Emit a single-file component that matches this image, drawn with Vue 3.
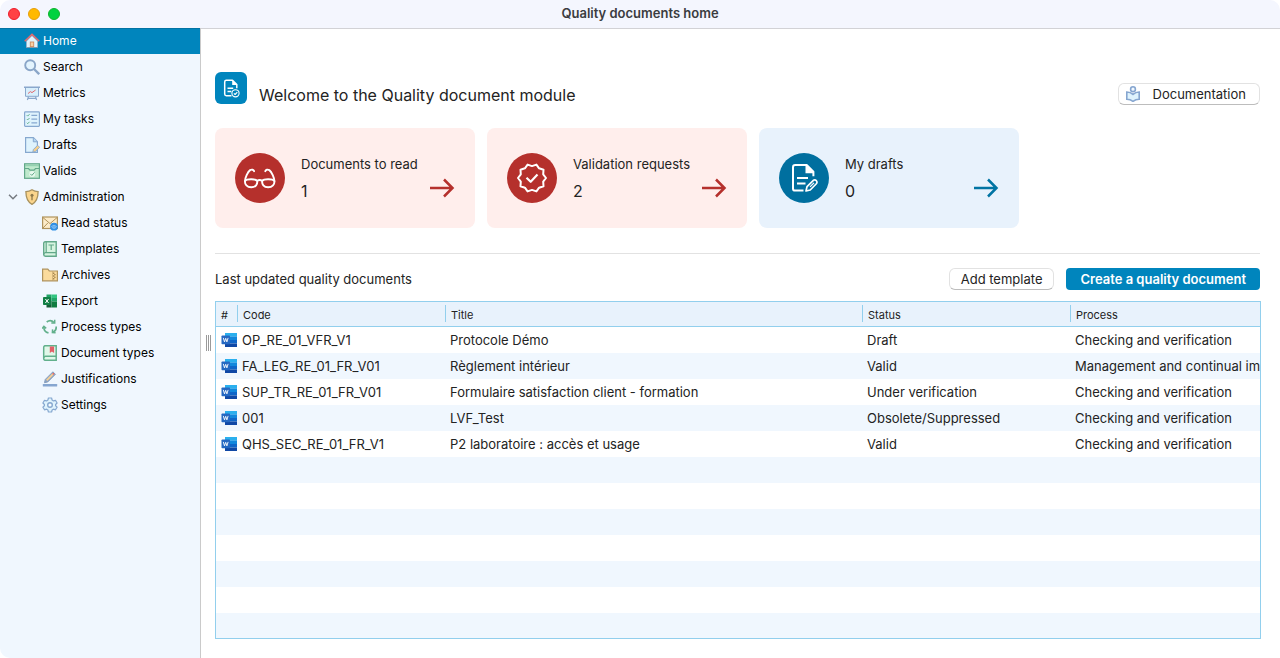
<script setup>
import { ref } from 'vue'

const adminOpen = ref(true)

const mainLinks = [
  { id: 'home', label: 'Home' },
  { id: 'search', label: 'Search' },
  { id: 'metrics', label: 'Metrics' },
  { id: 'tasks', label: 'My tasks' },
  { id: 'drafts', label: 'Drafts' },
  { id: 'valids', label: 'Valids' },
]

const adminLinks = [
  { id: 'read', label: 'Read status' },
  { id: 'templates', label: 'Templates' },
  { id: 'archives', label: 'Archives' },
  { id: 'export', label: 'Export' },
  { id: 'process', label: 'Process types' },
  { id: 'doctypes', label: 'Document types' },
  { id: 'justif', label: 'Justifications' },
  { id: 'settings', label: 'Settings' },
]

const cards = [
  { icon: 'glasses', label: 'Documents to read', count: 1, tone: 'red' },
  { icon: 'badge', label: 'Validation requests', count: 2, tone: 'red' },
  { icon: 'draftdoc', label: 'My drafts', count: 0, tone: 'blue' },
]

const documents = [
  { code: 'OP_RE_01_VFR_V1', title: 'Protocole Démo', status: 'Draft', process: 'Checking and verification' },
  { code: 'FA_LEG_RE_01_FR_V01', title: 'Règlement intérieur', status: 'Valid', process: 'Management and continual improvement' },
  { code: 'SUP_TR_RE_01_FR_V01', title: 'Formulaire satisfaction client - formation', status: 'Under verification', process: 'Checking and verification' },
  { code: '001', title: 'LVF_Test', status: 'Obsolete/Suppressed', process: 'Checking and verification' },
  { code: 'QHS_SEC_RE_01_FR_V1', title: 'P2 laboratoire : accès et usage', status: 'Valid', process: 'Checking and verification' },
]
</script>

<template>
  <div class="window">
    <svg class="sprite" aria-hidden="true">
      <symbol id="i-home" viewBox="0 0 16 16">
        <path d="M2.5 8v6.5h11V8L8 2.5z" fill="#dff3fd" stroke="#8fb4cf" />
        <path d="M2 14.5h12" stroke="#7f9bb0" />
        <rect x="6.3" y="9" width="3.4" height="4.6" fill="#f8cfa4" stroke="#d08a5c" stroke-width=".9" />
        <path d="M.7 8.3 8 1.4l7.3 6.9" fill="none" stroke="#e2696c" stroke-width="1.5" />
      </symbol>
      <symbol id="i-search" viewBox="0 0 16 16">
        <circle cx="6.2" cy="6.2" r="5" fill="#e3f4fe" stroke="#8aa6c8" stroke-width="1.9" />
        <path d="m10 10 5.2 5.2" stroke="#8aa6c8" stroke-width="2.4" />
      </symbol>
      <symbol id="i-metrics" viewBox="0 0 16 16">
        <path d="M1.5 2.5h13v8.8h-13z" fill="#d8effc" stroke="#8aa8cc" />
        <path d="M0 2.2h16" stroke="#8aa8cc" stroke-width="1.4" />
        <path d="M4.5 11.5 3.4 15M11.5 11.5l1.1 3.5M4 13.3h8" stroke="#8aa8cc" stroke-width="1.2" />
        <path d="m4 8.6 2.3-2 1.7 1L11.6 5" fill="none" stroke="#e2696c" />
      </symbol>
      <symbol id="i-tasks" viewBox="0 0 16 16">
        <rect x=".6" y=".9" width="14.8" height="14.4" rx=".8" fill="#dff3fd" stroke="#86a8cf" stroke-width="1.2" />
        <path d="M7.4 4.3h5.8M7.4 8.1h5.8M7.4 11.9h5.8" stroke="#86a8cf" stroke-width="1.2" />
        <path d="m2.8 4.2.9.9 1.8-1.9M2.8 8l.9.9L5.5 7M2.8 11.8l.9.9 1.8-1.9" fill="none" stroke="#62b08c" />
      </symbol>
      <symbol id="i-drafts" viewBox="0 0 16 16">
        <path d="M1.6.7h7.8l4 4v10.600H1.600z" fill="#dff3fd" stroke="#86a8cf" stroke-width="1.2" />
        <path d="M9.300.7v4.100h4" fill="#b5d5f3" stroke="#86a8cf" />
        <path d="m8.800 15.200.6-2.700 4.200-4.200 2 2-4.200 4.200z" fill="#f7cf8b" stroke="#86a8cf" stroke-width=".9" />
      </symbol>
      <symbol id="i-valids" viewBox="0 0 16 16">
        <rect x=".6" y=".8" width="14.8" height="14.5" fill="#bfe9cd" stroke="#62a889" stroke-width="1.2" />
        <path d="M1 5.5h3.5L6 7.200h4l1.500-1.700H15" fill="none" stroke="#62a889" stroke-width="1.2" />
        <path d="M1 2.7h14" stroke="#8ccdaa" />
        <circle cx="8.2" cy="11" r="3" fill="#e8f9ee" />
        <path d="m6.3 10.900 1.500 1.500 2.800-3" fill="none" stroke="#5fa988" />
      </symbol>
      <symbol id="i-admin" viewBox="0 0 16 16">
        <path d="M8 .8c2 1.300 4 1.800 6.100 1.800 0 6-1.100 10.200-6.100 12.800C3 12.800 1.900 8.600 1.900 2.600 4 2.600 6 2.100 8 .8z" fill="#fbd58c" stroke="#a8925f" stroke-width="1.3" />
        <circle cx="8" cy="6.2" r="1.5" fill="#8f7a4b" />
        <path d="M8 6v5.200" stroke="#8f7a4b" stroke-width="1.3" />
      </symbol>
      <symbol id="i-read" viewBox="0 0 16 16">
        <rect x=".6" y="2" width="14.8" height="11.5" fill="#fdebc8" stroke="#b0935c" stroke-width="1.2" />
        <path d="m1 2.600 7 6 7-6M1 13l4.800-5" fill="none" stroke="#b0935c" />
        <circle cx="12" cy="11.7" r="3.900" fill="#2f8fe5" />
        <path d="M9.600 11.900c1.400-2 3.400-2 4.800 0-1.400 1.800-3.400 1.800-4.800 0z" fill="none" stroke="#d5ecff" stroke-width=".6" />
        <circle cx="12" cy="11.8" r=".6" fill="#d5ecff" />
      </symbol>
      <symbol id="i-templates" viewBox="0 0 16 16">
        <path d="M3.300.7h10.900v14.600H3.400c-1.100 0-1.700-.8-1.700-1.700V2.400C1.700 1.400 2.300.7 3.300.7z" fill="#d6f4e0" stroke="#62a889" stroke-width="1.4" />
        <path d="M14 11.700H3.500c-1 0-1.600.6-1.600 1.700M4.200 1v10.600" fill="none" stroke="#62a889" stroke-width="1.2" />
        <path d="M6.500 4h5.500M9.200 4v5" stroke="#62a889" stroke-width="1.2" />
      </symbol>
      <symbol id="i-archives" viewBox="0 0 16 16">
        <path d="M.6 2.200h5.200L7.300 4h8.100v9.800H.6z" fill="#fbdb9c" stroke="#b0935c" stroke-width="1.2" />
        <path d="M10.500 4.500v9" stroke="#b0935c" stroke-width=".5" />
        <path d="M11.700 5.500v1.400M12.900 6.900v1.400M11.700 8.300v1.400M12.900 9.700v1.400M11.700 11.100v1.400" stroke="#a2824a" stroke-width="1.3" />
      </symbol>
      <symbol id="i-export" viewBox="0 0 16 16">
        <path d="M4.500 1.500h5V8h-5z" fill="#21a366" /><path d="M9.500 1.500H15V5H9.500z" fill="#33c481" />
        <path d="M9.500 5H15v3.500H9.500z" fill="#21a366" /><path d="M4.500 8h5v6.500h-5z" fill="#185c37" />
        <path d="M9.500 8.500H15v6H9.500z" fill="#107c41" />
        <rect x="1" y="4" width="8" height="8" rx=".8" fill="#128046" />
        <path d="m3.400 6 3.200 4M6.600 6l-3.200 4" stroke="#fff" />
      </symbol>
      <symbol id="i-process" viewBox="0 0 16 16">
        <g fill="none" stroke="#62b08c" stroke-width="1.700">
          <path d="M4.700 3C7 1.200 10 1.400 12 3.500" /><path d="M14.200 7.500c.2 2.500-1 4.700-3.300 5.800" /><path d="M6.500 13.900C3.600 13.300 1.900 11 1.800 8" />
          <path d="M12.700.7v3.400H9.300M13.600 13.700l-3.200-.2.200-3.100M0 9.600l1.900-2.200 2.300 2" stroke-width="1.5" />
        </g>
      </symbol>
      <symbol id="i-doctypes" viewBox="0 0 16 16">
        <path d="M3.300.7h10.900v14.600H3.400c-1.100 0-1.700-.8-1.700-1.700V2.400C1.700 1.400 2.300.7 3.300.7z" fill="#e0f7e8" stroke="#62b08c" stroke-width="1.5" />
        <path d="M14 11.300H3.500c-1 0-1.600.6-1.600 1.700" fill="none" stroke="#62b08c" stroke-width="1.4" />
        <path d="M7.800 1.500h4.300v6.500L9.900 6.500 7.800 8z" fill="#e25f68" />
      </symbol>
      <symbol id="i-justif" viewBox="0 0 16 16">
        <rect x=".8" y="13" width="14.4" height="2.6" rx=".6" fill="#86a6d0" />
        <path d="m2.500 11.700.8-3.300L10.900.8l2.500 2.500-7.600 7.600z" fill="#8fa6c6" stroke="#879ebd" />
        <path d="m4.700 9.400 7-7" stroke="#f8d193" stroke-width="1.6" />
        <path d="m10.700 3.400 1.200-1.200" stroke="#e2696c" stroke-width="1.6" />
      </symbol>
      <symbol id="i-settings" viewBox="0 0 16 16">
        <path d="M6.400 1h3.200l.5 2.100 1.300.8 2.100-.6 1.600 2.700L13.600 7.500v1.200l1.500 1.400-1.600 2.700-2.100-.6-1.300.8L9.600 15H6.400l-.5-2-1.300-.8-2.100.6L.9 10.100l1.500-1.400V7.500L.9 6l1.600-2.700 2.100.6 1.300-.8z" fill="#dff3fd" stroke="#86a8d0" stroke-width="1.2" stroke-linejoin="round" />
        <circle cx="8" cy="8" r="2.3" fill="#f6fbff" stroke="#86a8d0" stroke-width="1.4" />
      </symbol>
      <symbol id="i-word" viewBox="0 0 16 16">
        <path d="M4 1h12v3.600H4z" fill="#2bb0ee" /><path d="M4 4.500h12V8H4z" fill="#1288dc" />
        <path d="M4 8h12v3.500H4z" fill="#0f66c8" /><path d="M4 11.500h12V15H4z" fill="#1048a5" />
        <rect x=".5" y="3.5" width="8.500" height="8.700" rx=".8" fill="#2568c2" />
        <path d="m2.300 5.900 1.200 4 1.200-3.600 1.200 3.600 1.200-4" fill="none" stroke="#fff" stroke-width=".9" />
      </symbol>
      <symbol id="i-reader" viewBox="0 0 16 16">
        <g stroke="#86a6d0" stroke-width="1.6">
          <path d="M1.800 6c2.500 0 4.500.8 6.200 2.400C9.700 6.800 11.700 6 14.200 6v7.300c-2.300 0-4.300.6-6.200 2-1.900-1.400-3.900-2-6.200-2z" fill="#dff3fd" />
          <circle cx="8" cy="3.200" r="2.400" fill="#f3f9ff" />
        </g>
      </symbol>
      <symbol id="i-module" viewBox="0 0 32 32">
        <g fill="none" stroke="#fff" stroke-width="1.500" stroke-linejoin="round">
          <path d="M16.500 23.700H11.300c-1 0-1.600-.6-1.600-1.600V9.900c0-1 .6-1.600 1.600-1.600h6.200l4.300 4.300v3.600" />
          <path d="M12.500 16.300h5.700M12.500 19.500h3.800" />
          <circle cx="20.500" cy="21.300" r="3.600" stroke-width="1.1" />
          <path d="m18.900 21.300 1.200 1.200 2.200-2.300" stroke-width="1.1" />
        </g>
        <path d="M17.200 8.200v4.700h4.700z" fill="#fff" />
      </symbol>
      <symbol id="i-glasses" viewBox="0 0 50 50">
        <g fill="none" stroke="#fff" stroke-width="1.900" stroke-linecap="round" stroke-linejoin="round">
          <path d="M10 28c1.700-2.200 10.300-2.300 12.200-.2.500 3.400-1.500 6.500-5.900 6.500S9.700 31.400 10 28zM39.400 28c-1.700-2.200-10.300-2.300-12.200-.2-.5 3.400 1.500 6.500 5.900 6.500s6.600-2.900 6.300-6.300z" />
          <path d="M22.200 27.800c1.600-1.100 3.400-1.100 5 0" />
          <path d="M10 28c0-3 2.700-9.300 5.100-10.900 1.800-1 3.400-.3 4 1.100M39.400 28c0-3-2.700-9.300-5.100-10.900-1.800-1-3.400-.3-4 1.100" />
        </g>
      </symbol>
      <symbol id="i-badge" viewBox="0 0 50 50">
        <g fill="none" stroke="#fff" stroke-width="2" stroke-linejoin="round">
          <path d="M39 25 36.200 28.600 36.500 33.300 32.100 34.700 29.400 38.400 25 36.900 20.600 38.400 17.900 34.700 13.500 33.300 13.800 28.600 11 25 13.800 21.400 13.500 16.700 17.900 15.300 20.600 11.600 25 13.100 29.400 11.600 32.100 15.300 36.500 16.700 36.200 21.400z" />
          <path d="m19.500 24.800 4.200 4 6.800-7.200" stroke-width="2.200" />
        </g>
      </symbol>
      <symbol id="i-draftdoc" viewBox="0 0 50 50">
        <g fill="none" stroke="#fff" stroke-width="2" stroke-linejoin="round">
          <path d="M24.500 37.600h-8.300c-1.400 0-2.200-.8-2.200-2.200V14.200c0-1.400.8-2.200 2.200-2.200h11.500l6.700 6.800v4.400" />
          <path d="M18 25h11M18 30.500h8.500" />
          <path d="m27 38 1-4.300 6.400-6.400c2.100-1.300 4.600 1 3.200 3.200L31.200 37z" stroke-width="1.7" />
          <path d="m31 33.800 4-4" stroke-width="1.2" />
        </g>
        <path d="M26.500 11.500v8.700h8.500z" fill="#fff" />
      </symbol>
    </svg>

    <header class="titlebar">
      <div class="lights">
        <button class="light close" type="button" aria-label="Close"></button>
        <button class="light minimize" type="button" aria-label="Minimize"></button>
        <button class="light zoom" type="button" aria-label="Zoom"></button>
      </div>
      <span class="window-title">Quality documents home</span>
    </header>

    <div class="body">
      <nav class="sidebar" aria-label="Modules">
        <ul>
          <li v-for="link in mainLinks" :key="link.id">
            <a :href="'#' + link.id" class="nav-link" :class="{ active: link.id === 'home' }">
              <svg class="icon"><use :href="'#i-' + link.id" /></svg><span class="nav-label">{{ link.label }}</span>
            </a>
          </li>
          <li>
            <div class="group">
              <button class="toggle" type="button" aria-label="Toggle administration" :aria-expanded="adminOpen" @click="adminOpen = !adminOpen">
                <svg class="chevron" viewBox="0 0 10 6"><path d="m1 .8 4 4 4-4" fill="none" stroke="#777c82" stroke-width="1.500" /></svg>
              </button>
              <a href="#admin" class="group-link">
                <svg class="icon"><use href="#i-admin" /></svg><span class="nav-label">Administration</span>
              </a>
            </div>
            <ul v-show="adminOpen">
              <li v-for="link in adminLinks" :key="link.id">
                <a :href="'#' + link.id" class="nav-link nested">
                  <svg class="icon"><use :href="'#i-' + link.id" /></svg><span class="nav-label">{{ link.label }}</span>
                </a>
              </li>
            </ul>
          </li>
        </ul>
      </nav>

      <div class="splitter"><span class="grip"></span></div>

      <main class="content">
        <div class="heading">
          <svg class="module-icon"><use href="#i-module" /></svg>
          <h1>Welcome to the Quality document module</h1>
          <button class="btn doc-btn" type="button"><svg class="icon"><use href="#i-reader" /></svg>Documentation</button>
        </div>

        <div class="cards">
          <button v-for="card in cards" :key="card.icon" type="button" class="card" :class="card.tone">
            <svg class="card-icon"><use :href="'#i-' + card.icon" /></svg>
            <span class="card-text">
              <span class="card-label">{{ card.label }}</span>
              <span class="card-count">{{ card.count }}</span>
            </span>
            <svg class="arrow" viewBox="0 0 26 20"><path d="M1 10h23M15 1.500l8.500 8.500-8.500 8.500" fill="none" stroke="currentColor" stroke-width="2.500" /></svg>
          </button>
        </div>

        <section class="recent">
          <div class="toolbar">
            <h2>Last updated quality documents</h2>
            <button class="btn" type="button">Add template</button>
            <button class="btn primary" type="button">Create a quality document</button>
          </div>
          <div class="grid">
            <table>
              <colgroup>
                <col class="c-icon" /><col class="c-code" /><col class="c-title" /><col class="c-code" /><col />
              </colgroup>
              <thead>
                <tr>
                  <th scope="col"><span>#</span></th>
                  <th scope="col"><span>Code</span></th>
                  <th scope="col"><span>Title</span></th>
                  <th scope="col"><span>Status</span></th>
                  <th scope="col"><span>Process</span></th>
                </tr>
              </thead>
              <tbody>
                <tr v-for="row in documents" :key="row.code">
                  <td><svg class="icon"><use href="#i-word" /></svg></td>
                  <td>{{ row.code }}</td>
                  <td>{{ row.title }}</td>
                  <td>{{ row.status }}</td>
                  <td>{{ row.process }}</td>
                </tr>
              </tbody>
            </table>
          </div>
        </section>
      </main>
    </div>
  </div>
</template>

<style>
body {
  background: #fff;
}
</style>

<style scoped>
.window {
  display: flex;
  flex-direction: column;
  min-height: 100vh;
  overflow: hidden;
  border-radius: 10px;
  background: #fff;
  color: #232323;
  font-family: Inter, "Liberation Sans", sans-serif;
  font-size: 13px;
}
.window *,
.window {
  box-sizing: border-box;
}
.sprite {
  position: absolute;
  width: 0;
  height: 0;
}
button {
  padding: 0;
  border: 0;
  background: none;
  color: inherit;
  font: inherit;
}
ul {
  margin: 0;
  padding: 0;
  list-style: none;
}
.icon {
  flex: none;
  display: block;
  width: 16px;
  height: 16px;
}

.titlebar {
  display: grid;
  grid-template-columns: 1fr auto 1fr;
  align-items: center;
  height: 28px;
  padding: 0 8px;
  background: #f4f6fe;
}
.lights {
  display: flex;
  gap: 8px;
}
.light {
  width: 12px;
  height: 12px;
  border: 1px solid;
  border-radius: 50%;
}
.close {
  background: #ff4144;
  border-color: #ee1d2c;
}
.minimize {
  background: #ffb900;
  border-color: #e79f0a;
}
.zoom {
  background: #00d23f;
  border-color: #0fb42c;
}
.window-title {
  padding-bottom: 2px;
  color: #3b3c40;
  font-weight: 600;
}

.body {
  flex: 1;
  display: flex;
}
.sidebar {
  flex: none;
  width: 201px;
  border-right: 1px solid #cacaca;
  background: #f0f7fe;
  color: #000;
  font-size: 12px;
}
.nav-link,
.group-link {
  display: flex;
  align-items: center;
  gap: 3px;
  height: 26px;
  color: inherit;
  text-decoration: none;
}
.nav-link {
  padding-left: 24px;
}
.nested {
  padding-left: 42px;
}
.nav-label {
  padding-bottom: 2px;
}
.active {
  background: #0085bd;
  box-shadow: inset 0 1px #0273a3;
  color: #fff;
}
.group {
  display: flex;
  align-items: center;
}
.toggle {
  display: flex;
  align-items: center;
  justify-content: flex-end;
  width: 24px;
  height: 26px;
  padding-right: 6px;
}
.chevron {
  width: 10px;
  height: 6px;
}

.splitter {
  flex: none;
  display: flex;
  align-items: center;
  justify-content: center;
  width: 14px;
  padding-bottom: 2px;
  border-top: 1px solid #d2d2d6;
}
.grip {
  width: 5px;
  height: 16px;
  background: repeating-linear-gradient(90deg, #9a9a9a 0 1px, transparent 1px 2px);
}
.content {
  flex: 1;
  display: flex;
  flex-direction: column;
  min-width: 0;
  padding: 43px 20px 19px 0;
  border-top: 1px solid #d2d2d6;
}

.heading {
  display: flex;
  align-items: flex-start;
  height: 56px;
}
.module-icon {
  flex: none;
  width: 32px;
  height: 32px;
  margin-right: 12px;
  border-radius: 6px;
  background: #0085bd;
}
h1 {
  flex: 1;
  margin: 12px 0 0;
  font-size: 16px;
  font-weight: 400;
  line-height: 22px;
}
.btn {
  display: flex;
  align-items: center;
  justify-content: center;
  height: 22px;
  padding: 0 11px;
  border: 1px solid #e2e2e2;
  border-bottom-color: #bdbdbd;
  border-radius: 6px;
  background: #fff;
  line-height: 20px;
}
.doc-btn {
  gap: 12px;
  margin-top: 11px;
  padding: 0 13px 0 6px;
}
.primary {
  padding: 0 14px;
  border: 0;
  border-radius: 4px;
  background: #0085bd;
  color: #fff;
  font-weight: 600;
}

.cards {
  display: flex;
  gap: 12px;
}
.card {
  display: flex;
  align-items: center;
  width: 260px;
  height: 100px;
  padding: 0 20px;
  border-radius: 8px;
  text-align: left;
}
.red {
  background: #ffeeec;
}
.blue {
  background: #e8f2fc;
}
.card-icon {
  flex: none;
  width: 50px;
  height: 50px;
  margin-right: 16px;
  border-radius: 50%;
}
.red .card-icon {
  background: #b5302c;
}
.blue .card-icon {
  background: #006f9f;
}
.card-text {
  flex: 1;
  display: flex;
  flex-direction: column;
  gap: 6px;
  white-space: nowrap;
}
.card-label {
  line-height: 20px;
}
.card-count {
  font-size: 16px;
  line-height: 22px;
}
.arrow {
  flex: none;
  width: 26px;
  height: 20px;
  margin-top: 20px;
}
.red .arrow {
  color: #b5302c;
}
.blue .arrow {
  color: #0074a3;
}

.recent {
  flex: 1;
  display: flex;
  flex-direction: column;
  margin-top: 25px;
  padding-top: 14px;
  border-top: 1px solid #e2e2e2;
}
.toolbar {
  display: flex;
  align-items: center;
  gap: 12px;
}
h2 {
  flex: 1;
  margin: 0;
  font-size: 13px;
  font-weight: 400;
}
.grid {
  flex: 1;
  margin: 11px -1px 0 0;
  overflow: hidden;
  border: 1px solid #92cfed;
  background: repeating-linear-gradient(#fff 0 26px, #f0f7fe 26px 52px) 0 25px;
}
table {
  width: 100%;
  table-layout: fixed;
  border-collapse: separate;
  border-spacing: 0;
}
.c-icon {
  width: 21px;
}
.c-code {
  width: 208px;
}
.c-title {
  width: 417px;
}
thead tr {
  background: #e8f2fc;
}
th {
  height: 25px;
  padding: 3px 0 0;
  border-bottom: 1px solid #92cfed;
  font-size: 11px;
  font-weight: 400;
  line-height: 20px;
  text-align: left;
  vertical-align: top;
}
th span {
  display: block;
  height: 17px;
  padding-left: 5px;
  border-left: 1px solid #92cfed;
}
th:first-child span {
  border-left: 0;
}
td {
  height: 26px;
  padding: 0 0 0 5px;
  overflow: hidden;
  line-height: 26px;
  white-space: nowrap;
}
</style>
